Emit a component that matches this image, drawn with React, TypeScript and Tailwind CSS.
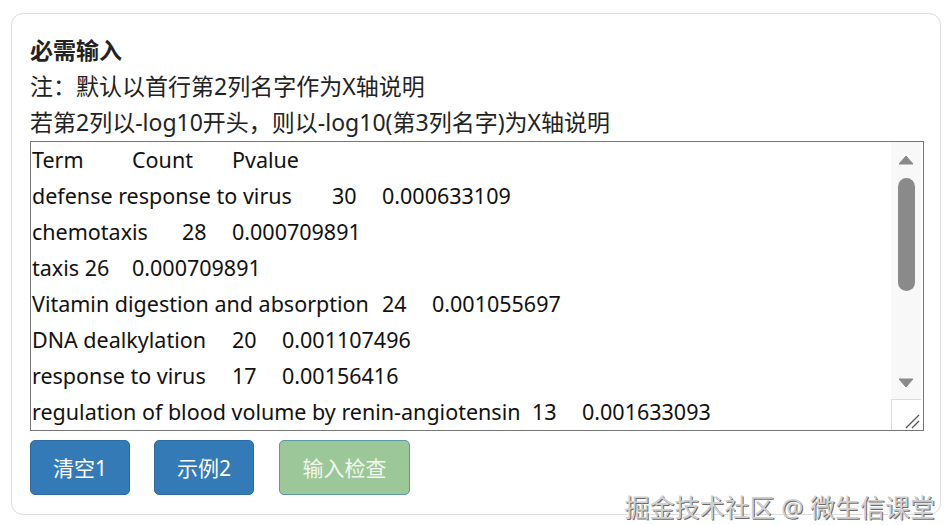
const rows = [
  'Term\tCount\tPvalue',
  'defense response to virus\t30\t0.000633109',
  'chemotaxis\t28\t0.000709891',
  'taxis 26\t0.000709891',
  'Vitamin digestion and absorption\t24\t0.001055697',
  'DNA dealkylation\t20\t0.001107496',
  'response to virus\t17\t0.00156416',
  'regulation of blood volume by renin-angiotensin\t13\t0.001633093',
  'negative regulation of viral genome replication\t12\t0.002341875',
  'cellular response to interferon-beta\t11\t0.003102557',
];

export default function App() {
  return (
    <div className="relative min-h-screen bg-white font-['Noto_Sans','Noto_Sans_CJK_SC',sans-serif] text-[23px] leading-[36px] text-[#222]">
      {/* Card */}
      <div className="mx-[11px] mt-[13px] rounded-[12px] border border-[#dcdcdc] px-[18px] pt-[18px] pb-[19px]">
        <div className="font-bold">必需输入</div>
        <div>注：默认以首行第2列名字作为X轴说明</div>
        <div>若第2列以-log10开头，则以-log10(第3列名字)为X轴说明</div>

        {/* Textarea */}
        <div className="relative mt-px">
          <textarea
            readOnly
            defaultValue={rows.join('\n')}
            className="block h-[290px] w-[894px] resize-none overflow-hidden border border-[#767676] bg-white py-0 pr-[34px] pl-px font-['Noto_Sans','Noto_Sans_CJK_SC',sans-serif] text-[21.5px] leading-[36px] text-[#111] outline-none [tab-size:50px]"
          />
          {/* Scrollbar overlay */}
          <div className="absolute top-px right-px bottom-px flex w-[30px] flex-col items-center bg-[#f8f8f8]">
            <svg width="16" height="10" viewBox="0 0 16 10" className="mt-[13px]">
              <path d="M8 1 L15 9 L1 9 Z" fill="#8a8a8a" stroke="#8a8a8a" strokeLinejoin="round" />
            </svg>
            <div className="mt-[13px] h-[113px] w-[17px] rounded-full bg-[#8a8a8a]" />
            <div className="flex-1" />
            <svg width="16" height="10" viewBox="0 0 16 10" className="mb-[11px]">
              <path d="M1 1 L15 1 L8 9 Z" fill="#8a8a8a" stroke="#8a8a8a" strokeLinejoin="round" />
            </svg>
            <div className="relative h-[31px] w-[30px] border-t border-l border-[#dcdcdc] bg-white">
              <svg width="30" height="31" viewBox="0 0 30 31" className="absolute -top-px -left-px">
                <path d="M15 29 L28 16 M21 29 L28 22" stroke="#555" strokeWidth="1.3" />
              </svg>
            </div>
          </div>
        </div>

        {/* Buttons */}
        <div className="mt-[9px] flex items-center text-[21px]">
          <button className="h-[55px] w-[100px] rounded-[5px] border border-[#2e6da4] bg-[#337ab7] text-white">
            清空1
          </button>
          <button className="ml-[24px] h-[55px] w-[100px] rounded-[5px] border border-[#2e6da4] bg-[#337ab7] text-white">
            示例2
          </button>
          <button className="ml-[25px] h-[55px] w-[131px] rounded-[5px] border border-[#5f96a8] bg-[#9cc798] text-[#f1f7ee]">
            输入检查
          </button>
        </div>
      </div>

      {/* Watermark */}
      <div className="absolute top-[479px] right-[17px] text-[25px] leading-[30px] text-[#cfcfcf] [text-shadow:1px_1px_0_#6b6b6b,-1px_-1px_0_#ffffff]">
        掘金技术社区 @ 微生信课堂
      </div>
    </div>
  );
}
